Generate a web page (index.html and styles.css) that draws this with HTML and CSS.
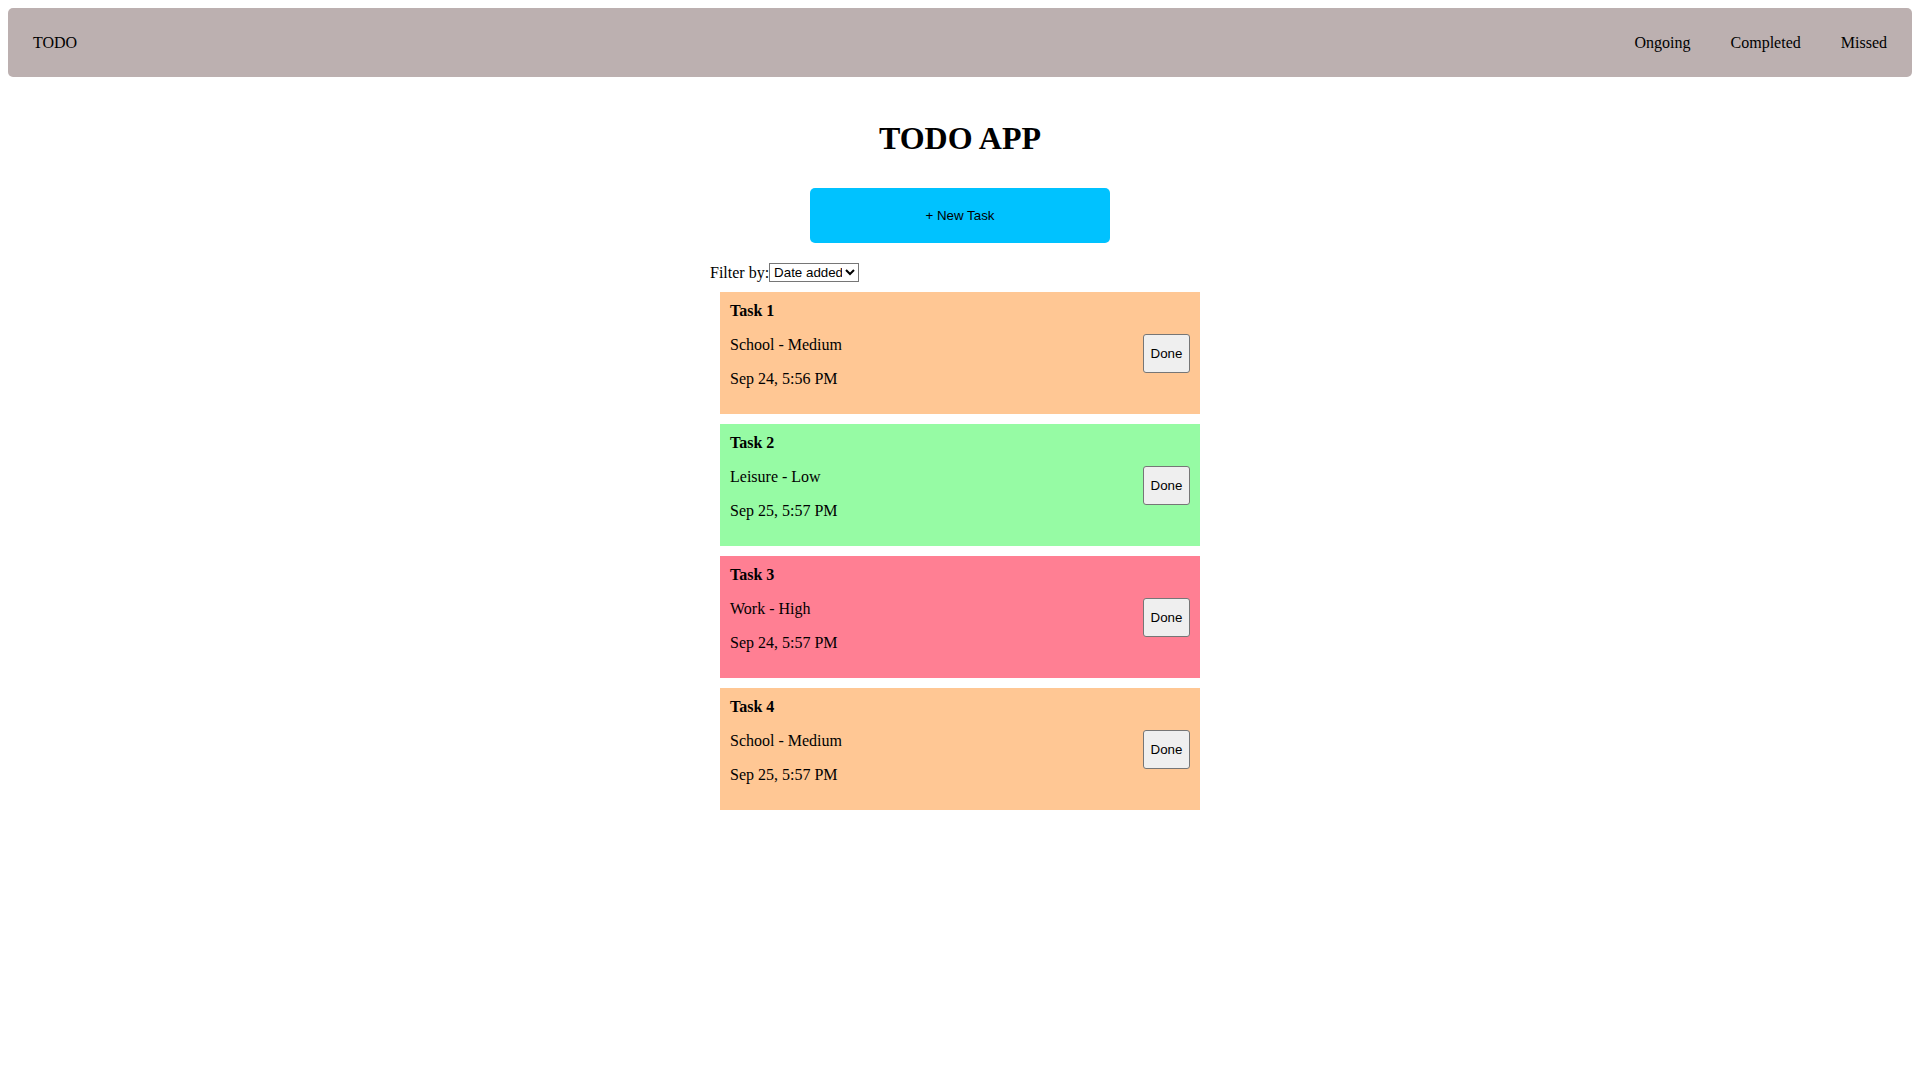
FILE: index.html
```html
<!DOCTYPE html>
<html lang="en">
<head>
<meta charset="utf-8">
<title>TODO APP</title>
<link rel="stylesheet" href="styles.css">
</head>
<body>
<nav class="navbar">
  <a class="brand" href="#">TODO</a>
  <div class="nav-links">
    <a href="#">Ongoing</a>
    <a href="#">Completed</a>
    <a href="#">Missed</a>
  </div>
</nav>
<main class="main">
  <h1 class="title">TODO APP</h1>
  <button class="new-task">+ New Task</button>
  <div class="list-wrap">
    <div class="filter">
      <label for="sort">Filter by:</label><select id="sort" class="filter-select"><option>Date added</option><option>Priority</option></select>
    </div>
    <div class="card medium">
      <div class="card-body">
        <p class="task-name">Task 1</p>
        <p>School - Medium</p>
        <p>Sep 24, 5:56 PM</p>
      </div>
      <button class="done">Done</button>
    </div>
    <div class="card low">
      <div class="card-body">
        <p class="task-name">Task 2</p>
        <p>Leisure - Low</p>
        <p>Sep 25, 5:57 PM</p>
      </div>
      <button class="done">Done</button>
    </div>
    <div class="card high">
      <div class="card-body">
        <p class="task-name">Task 3</p>
        <p>Work - High</p>
        <p>Sep 24, 5:57 PM</p>
      </div>
      <button class="done">Done</button>
    </div>
    <div class="card medium">
      <div class="card-body">
        <p class="task-name">Task 4</p>
        <p>School - Medium</p>
        <p>Sep 25, 5:57 PM</p>
      </div>
      <button class="done">Done</button>
    </div>
  </div>
</main>
</body>
</html>
```
FILE: styles.css
```css
html, body {
  background: #ffffff;
}
body {
  margin: 8px;
  font-family: "Liberation Serif", "Times New Roman", serif;
  font-size: 16px;
  color: #000;
}
.navbar {
  height: 69px;
  box-sizing: border-box;
  padding: 0 25px;
  background: #bcb0b0;
  border-radius: 5px;
  display: flex;
  align-items: center;
  justify-content: space-between;
}
.navbar a {
  color: #000;
  text-decoration: none;
}
.nav-links {
  display: flex;
  gap: 40px;
}
.main {
  text-align: center;
}
.title {
  font-size: 32px;
  font-weight: bold;
  margin: 43px 0 0;
}
.new-task {
  display: block;
  width: 300px;
  height: 55px;
  margin: 31px auto 20px;
  border: none;
  border-radius: 5px;
  background: #00c2ff;
  color: #000;
  font-family: "Liberation Sans", Arial, sans-serif;
  font-size: 13.33px;
}
.list-wrap {
  width: 500px;
  margin: 0 auto;
  text-align: left;
}
.filter {
  display: flex;
  align-items: center;
  height: 19px;
}
.filter-select {
  width: 90px;
  height: 19px;
  padding: 0;
  font-family: "Liberation Sans", Arial, sans-serif;
  font-size: 13.33px;
  border: 1px solid #767676;
  border-radius: 0;
  background: #fff;
  color: #000;
}
.card {
  margin: 10px;
  padding: 10px;
  display: flex;
  align-items: center;
  justify-content: space-between;
}
.card p {
  margin: 0 0 16px;
  line-height: 18px;
}
.card .task-name {
  font-weight: bold;
}
.medium { background: #ffc794; }
.low { background: #96fba4; }
.high { background: #ff7f93; }
.done {
  width: 47px;
  height: 39px;
  padding: 0;
  background: #efefef;
  border: 1px solid #767676;
  border-radius: 3px;
  color: #000;
  font-family: "Liberation Sans", Arial, sans-serif;
  font-size: 13.33px;
}
```
